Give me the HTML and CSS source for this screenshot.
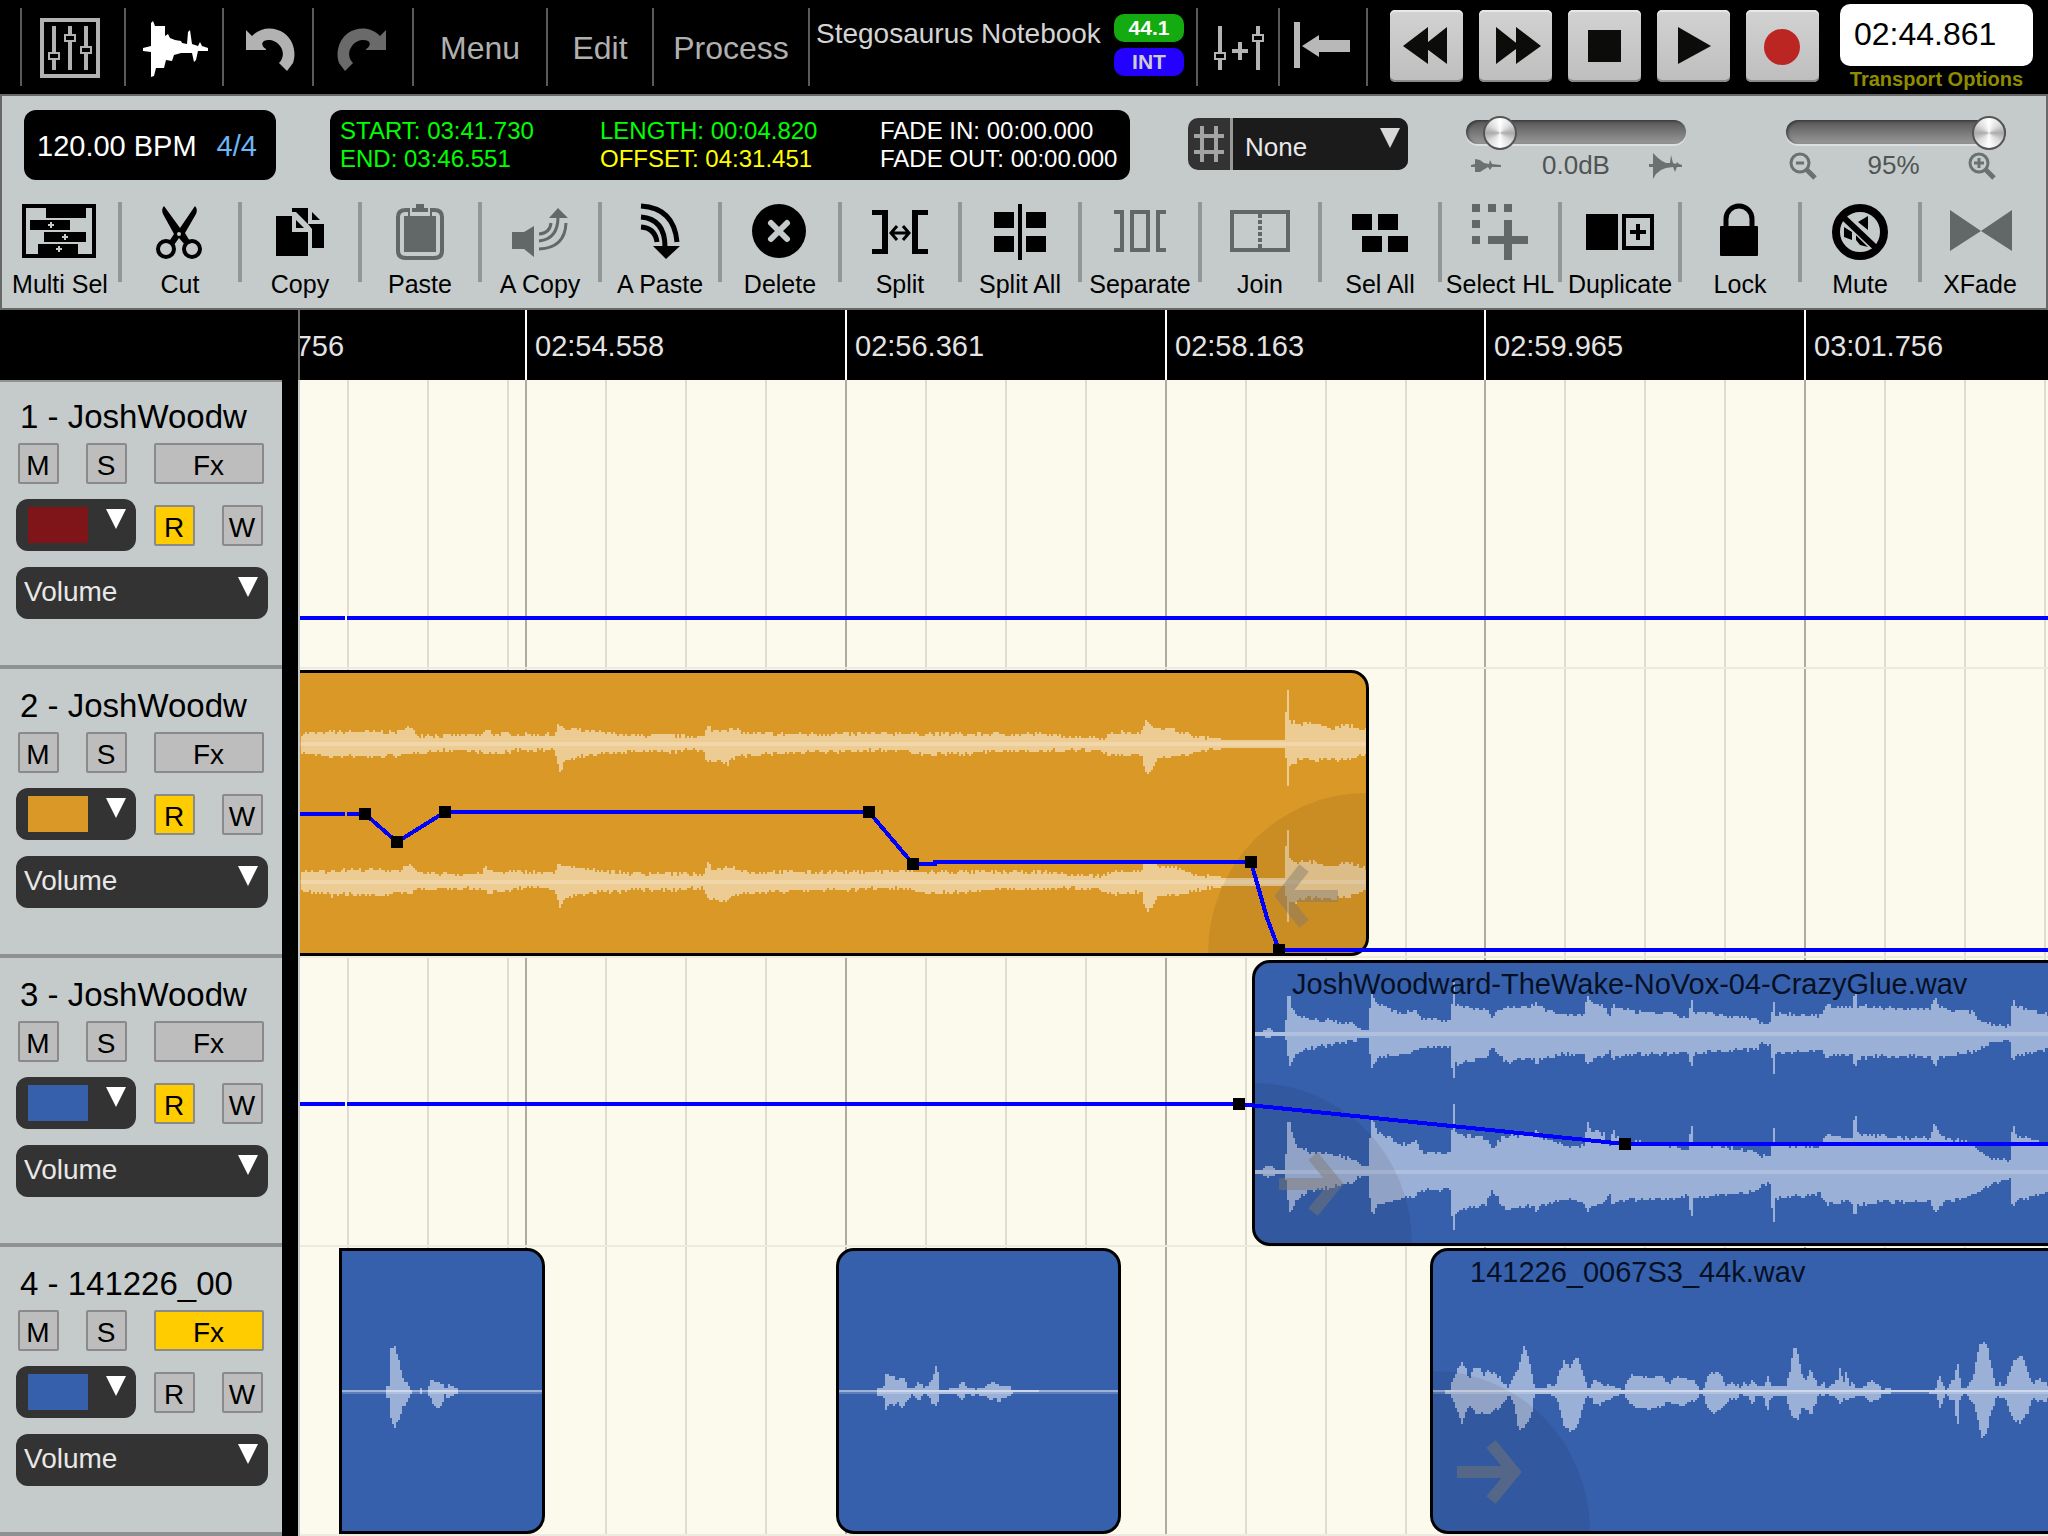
FILE: index.html
```html
<!DOCTYPE html>
<html lang="en">
<head>
    <meta charset="UTF-8">
    <meta name="viewport" content="width=device-width, initial-scale=1.0">
    <title>Stegosaurus Notebook</title>
    <link rel="stylesheet" href="styles.css">
</head>
<body>
    <header class="topbar">
        <button class="top-btn w104" aria-label="Mixer">
            <svg width="102" height="78" viewBox="22 8 102 78" fill="none" stroke="#b2b2b2">
                <rect x="42" y="20" width="56" height="56" stroke-width="4"/>
                <path d="M54 26V70M70 26V70M86 26V70" stroke-width="4"/>
                <g fill="#000" stroke-width="2">
                    <rect x="49" y="53" width="10" height="6"/>
                    <rect x="65" y="35" width="10" height="6"/>
                    <rect x="81" y="47" width="10" height="6"/>
                </g>
            </svg>
        </button>
        <button class="top-btn w98" aria-label="Audio editor">
            <svg width="96" height="78" viewBox="126 8 96 78" fill="#fff">
                <path d="M143 48L151 46V23L153 21L155 26H165V36L168 34L170 38L175 40L181 41L182 43L187 44L188 32L190 30L192 44L198 46L200 42L202 46L208 48V51L198 51L196 60L194 62L192 53L181 53L174 55L172 61L166 60L164 68H156L154 76L151 77V52L143 51Z"/>
            </svg>
        </button>
        <button class="top-btn w90" aria-label="Undo">
            <svg width="88" height="78" viewBox="224 8 88 78" fill="#b2b2b2">
                <path d="M246 30L252 36C260 27 274 26 284 33C295 41 296 55 293 63L287 71L279 63C284 58 284 51 280 46C276 40 268 39 264 41C261 43 262 47 266 49V50H246Z"/>
            </svg>
        </button>
        <button class="top-btn w100" aria-label="Redo">
            <svg width="98" height="78" viewBox="314 8 98 78" fill="#6a6a6a">
                <path transform="translate(632 0) scale(-1 1)" d="M246 30L252 36C260 27 274 26 284 33C295 41 296 55 293 63L287 71L279 63C284 58 284 51 280 46C276 40 268 39 264 41C261 43 262 47 266 49V50H246Z"/>
            </svg>
        </button>
        <button class="top-btn w134">Menu</button>
        <button class="top-btn w106">Edit</button>
        <button class="top-btn w156">Process</button>
        <div class="project">
            <span class="project-name">Stegosaurus Notebook</span>
            <div class="badges">
                <span class="badge badge-rate">44.1</span>
                <span class="badge badge-sync">INT</span>
            </div>
        </div>
        <button class="top-btn w82" aria-label="Add automation">
            <svg width="80" height="78" viewBox="1198 8 80 78" fill="none" stroke="#b4b4b4">
                <path d="M1220 26V70M1258 26V70M1232 51H1248M1240 42V60" stroke-width="4"/>
                <g fill="#000" stroke-width="2">
                    <rect x="1215" y="53" width="10" height="6"/>
                    <rect x="1253" y="35" width="10" height="6"/>
                </g>
            </svg>
        </button>
        <button class="top-btn w90 top-btn-last" aria-label="Return to start">
            <svg width="86" height="78" viewBox="1280 8 86 78" fill="#b8b8b8">
                <path d="M1294 22H1300V68H1294ZM1302 46L1319 35V40H1350V52H1319V57Z"/>
            </svg>
        </button>

        <div class="transport">
            <button aria-label="Rewind">
                <svg width="73" height="72" fill="#0c0c0a"><path d="M13 36L38 17V54ZM33 36L57 17V54Z"/></svg>
            </button>
            <button aria-label="Fast forward">
                <svg width="73" height="72" fill="#0c0c0a"><path d="M62 36L37 17V54ZM41 36L17 17V54Z"/></svg>
            </button>
            <button aria-label="Stop">
                <svg width="73" height="72" fill="#0c0c0a"><rect x="20" y="20" width="33" height="32"/></svg>
            </button>
            <button aria-label="Play">
                <svg width="73" height="72" fill="#0c0c0a"><path d="M54 36L21 17V54Z"/></svg>
            </button>
            <button aria-label="Record">
                <svg width="73" height="72" fill="#bb2622"><circle cx="36" cy="37" r="18"/></svg>
            </button>
        </div>
        <div class="clock">
            <output class="clock-time">02:44.861</output>
            <a class="clock-link" href="#">Transport Options</a>
        </div>
    </header>

    <section class="panel">
        <div class="info-row">
            <div class="tempo"><span>120.00 BPM</span><span class="meter">4/4</span></div>
            <div class="selection">
                <span>START: 03:41.730</span>
                <span>LENGTH: 00:04.820</span>
                <span class="white">FADE IN: 00:00.000</span>
                <span>END: 03:46.551</span>
                <span class="yellow">OFFSET: 04:31.451</span>
                <span class="white">FADE OUT: 00:00.000</span>
            </div>
            <div class="snap">
                <svg class="snap-icon" width="42" height="52" stroke="#a3a3a3" stroke-width="4"><path d="M14 8V44M28 8V44M6 18H36M6 34H36"/></svg>
                <div class="drop snap-drop">
                    <select aria-label="Snap to grid"><option>None</option></select>
                </div>
            </div>
            <div class="slider gain">
                <input type="range" min="0" max="100" value="9" aria-label="Gain">
                <div class="slider-legend">
                    <svg width="40" height="28" fill="#6b7070"><path d="M5 13L9 12V7L14 8L18 11L23 12L24 8L26 12L35 13V15L26 15L24 18L22 15L14 20H9V15L5 15Z"/></svg>
                    <output>0.0dB</output>
                    <svg width="40" height="28" fill="#6b7070"><path d="M3 12L7 12V1L10 4L12 6L16 9L20 11L24 11L25 3L27 11L30 12L31 10L33 12L36 13V15L31 15L29 20L27 15L20 16L15 18L10 22L7 27V15L3 15Z"/></svg>
                </div>
            </div>
            <div class="slider zoom">
                <input type="range" min="0" max="100" value="100" aria-label="Zoom">
                <div class="slider-legend">
                    <svg width="36" height="28" fill="none" stroke="#6b7070"><circle cx="14" cy="11" r="9" stroke-width="3"/><path d="M10 11H18" stroke-width="3"/><path d="M20 17L29 26" stroke-width="5"/></svg>
                    <output>95%</output>
                    <svg width="36" height="28" fill="none" stroke="#6b7070"><circle cx="14" cy="11" r="9" stroke-width="3"/><path d="M9 11H19M14 6V16" stroke-width="3"/><path d="M20 17L29 26" stroke-width="5"/></svg>
                </div>
            </div>
        </div>

        <nav class="tools">
            <button class="tool">
                <svg viewBox="2 0 116 62"><path d="M24 6H94V56H24Z" fill="none" stroke="#000" stroke-width="4"/><path d="M46 6H86V18H46ZM30 20H70V30H30ZM44 32H86V42H44ZM38 44H78V54H38Z"/><path d="M48 25H54M51 22V28M62 37H68M65 34V40M56 49H62M59 46V52" stroke="#c5cbcb" stroke-width="2"/></svg>
                Multi Sel
            </button>
            <button class="tool">
                <svg viewBox="2 0 116 62"><path d="M44 6Q41 9 43 14L54 34L48 43L54 45L59 38L65 45L71 43L65 33L76 14Q78 9 75 6L60 28Z"/><circle cx="59" cy="34" r="2" fill="#c5cbcb"/><circle cx="46" cy="49" r="8" fill="none" stroke="#000" stroke-width="4"/><circle cx="72" cy="49" r="8" fill="none" stroke="#000" stroke-width="4"/></svg>
                Cut
            </button>
            <button class="tool">
                <svg viewBox="2 0 116 62"><path d="M36 16H52V32H68V56H36ZM56 20L64 28H56ZM52 8H68V24L56 12H52ZM68 24H84V48H72V29ZM72 12L80 20H72Z"/></svg>
                Copy
            </button>
            <button class="tool off">
                <svg viewBox="2 0 116 62"><path d="M48 10H46Q38 10 38 17V51Q38 58 46 58H74Q82 58 82 51V17Q82 10 74 10H72" fill="none" stroke="#626868" stroke-width="4"/><path d="M44 16H48V8H50V16H70V8H72V16H76V52H44ZM56 4H64V8H68V12H52V8H56Z"/></svg>
                Paste
            </button>
            <button class="tool off">
                <svg viewBox="2 0 116 62"><path d="M32 32H44L54 26V57L44 49H32ZM78 8L88 18H69Z"/><path d="M59 49Q85 48 86 23M59 41Q78 39 78 17M59 34Q70 33 71 23" fill="none" stroke="#626868" stroke-width="3"/></svg>
                A Copy
            </button>
            <button class="tool">
                <svg viewBox="2 0 116 62"><path d="M53 46H80L66 59Z"/><path d="M41 6Q74 8 77 42M41 17Q65 19 65 47M41 27Q55 28 57 42" fill="none" stroke="#000" stroke-width="5"/></svg>
                A Paste
            </button>
            <button class="tool">
                <svg viewBox="2 0 116 62"><circle cx="59" cy="31" r="27"/><path d="M51 23L67 39M67 23L51 39" stroke="#c5cbcb" stroke-width="6" stroke-linecap="round"/></svg>
                Delete
            </button>
            <button class="tool">
                <svg viewBox="2 0 116 62"><path d="M32 10H48V54H32V49H42V15H32ZM88 10H72V54H88V49H78V15H88Z"/><path d="M57 26L51 33L57 40M63 26L69 33L63 40M52 33H68" fill="none" stroke="#000" stroke-width="3"/></svg>
                Split
            </button>
            <button class="tool">
                <svg viewBox="2 0 116 62"><path d="M34 12H54V28H34ZM66 12H86V28H66ZM34 36H54V52H34ZM66 36H86V52H66ZM58 4H62V60H58Z"/></svg>
                Split All
            </button>
            <button class="tool off">
                <svg viewBox="2 0 116 62"><path d="M34 12H42V50H34M52 12H68V50H52ZM86 12H78V50H86" fill="none" stroke="#626868" stroke-width="4"/></svg>
                Separate
            </button>
            <button class="tool off">
                <svg viewBox="2 0 116 62"><path d="M32 12H88V50H32Z" fill="none" stroke="#626868" stroke-width="4"/><path d="M60 14V48" stroke="#626868" stroke-width="4" stroke-dasharray="4 2"/></svg>
                Join
            </button>
            <button class="tool">
                <svg viewBox="2 0 116 62"><path d="M32 14H52V30H32ZM58 14H78V30H58ZM42 36H62V52H42ZM68 36H88V52H68Z"/></svg>
                Sel All
            </button>
            <button class="tool off">
                <svg viewBox="2 0 116 62"><path d="M32 4H40V12H32ZM48 4H56V12H48ZM64 4H72V12H64ZM32 20H40V28H32ZM32 36H40V44H32ZM64 20H72V36H88V44H72V60H64V44H48V36H64Z"/></svg>
                Select HL
            </button>
            <button class="tool">
                <svg viewBox="2 0 116 62"><path d="M26 14H58V50H26Z"/><path d="M64 16H92V48H64ZM70 32H86M78 24V40" fill="none" stroke="#000" stroke-width="4"/></svg>
                Duplicate
            </button>
            <button class="tool">
                <svg viewBox="2 0 116 62"><rect x="40" y="26" width="38" height="30" rx="1"/><path d="M46 28V19A13 13 0 0 1 72 19V28" fill="none" stroke="#000" stroke-width="5"/></svg>
                Lock
            </button>
            <button class="tool">
                <svg viewBox="2 0 116 62"><circle cx="60" cy="32" r="24" fill="none" stroke="#000" stroke-width="8"/><path d="M44 27L52 32V40L44 37ZM68 16V30L58 22ZM56 35L68 47L60 45L56 40Z"/><path d="M46 19L74 46" stroke="#c5cbcb" stroke-width="9"/><path d="M42 16L77 49" stroke="#000" stroke-width="6"/></svg>
                Mute
            </button>
            <button class="tool off">
                <svg viewBox="2 0 116 62"><path d="M30 10L61 31L92 10V51L61 31L30 51Z"/></svg>
                XFade
            </button>
        </nav>
    </section>

    <main class="session">
        <div class="corner"></div>
        <div class="ruler">
            <span class="tick tick-first">02:52.756</span>
            <span class="tick">02:54.558</span>
            <span class="tick">02:56.361</span>
            <span class="tick tick-short">02:58.163</span>
            <span class="tick">02:59.965</span>
            <span class="tick tick-rest">03:01.756</span>
        </div>

        <div class="headers">
            <section class="track">
                <h2>1 - JoshWoodw</h2>
                <div class="row">
                    <button class="sq">M</button>
                    <button class="sq">S</button>
                    <button class="sq fx">Fx</button>
                </div>
                <div class="row row-color">
                    <div class="drop color-drop red"><select aria-label="Track 1 colour"><option value="red"></option></select></div>
                    <button class="sq on">R</button>
                    <button class="sq">W</button>
                </div>
                <div class="drop param-drop"><select aria-label="Track 1 automation"><option>Volume</option></select></div>
            </section>
            <section class="track">
                <h2>2 - JoshWoodw</h2>
                <div class="row">
                    <button class="sq">M</button>
                    <button class="sq">S</button>
                    <button class="sq fx">Fx</button>
                </div>
                <div class="row row-color">
                    <div class="drop color-drop orange"><select aria-label="Track 2 colour"><option value="orange"></option></select></div>
                    <button class="sq on">R</button>
                    <button class="sq">W</button>
                </div>
                <div class="drop param-drop"><select aria-label="Track 2 automation"><option>Volume</option></select></div>
            </section>
            <section class="track">
                <h2>3 - JoshWoodw</h2>
                <div class="row">
                    <button class="sq">M</button>
                    <button class="sq">S</button>
                    <button class="sq fx">Fx</button>
                </div>
                <div class="row row-color">
                    <div class="drop color-drop blue"><select aria-label="Track 3 colour"><option value="blue"></option></select></div>
                    <button class="sq on">R</button>
                    <button class="sq">W</button>
                </div>
                <div class="drop param-drop"><select aria-label="Track 3 automation"><option>Volume</option></select></div>
            </section>
            <section class="track">
                <h2>4 - 141226_00</h2>
                <div class="row">
                    <button class="sq">M</button>
                    <button class="sq">S</button>
                    <button class="sq fx on">Fx</button>
                </div>
                <div class="row row-color">
                    <div class="drop color-drop blue"><select aria-label="Track 4 colour"><option value="blue"></option></select></div>
                    <button class="sq">R</button>
                    <button class="sq">W</button>
                </div>
                <div class="drop param-drop"><select aria-label="Track 4 automation"><option>Volume</option></select></div>
            </section>
        </div>

        <div class="lanes">
            <div class="grid">
                <i class="tick-first"></i><i></i><i></i><i class="tick-short"></i><i></i><i class="tick-rest"></i>
            </div>
            <div class="lane">
                <svg class="automation"><path d="M0 238H45M47 238H4000"/></svg>
            </div>
            <div class="lane">
                <div class="clip orange clip-2"><svg class="wave" data-wave="glue"></svg>
                    <svg class="fade fade-out" viewBox="0 0 160 160"><path d="M2 160A158 160 0 0 1 160 0V160Z"/><path class="arrow" d="M132 103H78M98 75L76 103L98 131"/></svg>
                </div>
                <svg class="automation"><path d="M0 145H45M47 145H65L97 173L145 143H569L613 195H635V193H951L967 249L979 281H4000"/><path class="node" d="M59 139h12v12h-12zM91 167h12v12h-12zM139 137h12v12h-12zM563 137h12v12h-12zM607 189h12v12h-12zM945 187h12v12h-12zM973 275h12v12h-12z"/></svg>
            </div>
            <div class="lane">
                <div class="clip blue clip-3"><svg class="wave" data-wave="crazy"></svg>
                    <span class="clip-name">JoshWoodward-TheWake-NoVox-04-CrazyGlue.wav</span>
                    <svg class="fade fade-in" viewBox="0 0 160 160"><path d="M157 160A157 160 0 0 0 0 0V160Z"/><path class="arrow" d="M24 101H82M58 73L81 101L58 129"/></svg>
                </div>
                <svg class="automation"><path d="M0 146H45M47 146H939L1325 186H4000"/><path class="node" d="M933 140h12v12h-12zM1319 180h12v12h-12z"/></svg>
            </div>
            <div class="lane">
                <div class="clip blue clip-4a"><svg class="wave" data-wave="hitA"></svg></div>
                <div class="clip blue clip-4b"><svg class="wave" data-wave="hitB"></svg></div>
                <div class="clip blue clip-4c"><svg class="wave" data-wave="voice"></svg>
                    <span class="clip-name">141226_0067S3_44k.wav</span>
                    <svg class="fade fade-in" viewBox="0 0 160 160"><path d="M157 160A157 160 0 0 0 0 0V160Z"/><path class="arrow" d="M24 101H82M58 73L81 101L58 129"/></svg>
                </div>
            </div>
        </div>
    </main>
    <script src="waves.js"></script>
</body>
</html>
```
FILE: styles.css
```css
* {
    box-sizing: border-box;
}
body {
    margin: 0;
    background: #000;
    color: #000;
    font-family: "Liberation Sans", Arial, Helvetica, sans-serif;
    overflow-x: hidden;
}
button, select {
    font-family: inherit;
    margin: 0;
    padding: 0;
    border: none;
    background: none;
    color: inherit;
}
svg {
    display: block;
    flex: none;
}

/* top bar */
.topbar {
    display: flex;
    height: 94px;
    padding-left: 20px;
}
.top-btn {
    flex: none;
    height: 78px;
    margin-top: 8px;
    border-left: 2px solid #5a5a5a;
    color: #b0b0b0;
    font-size: 32px;
    line-height: 42px;
    white-space: nowrap;
}
.top-btn-last {
    border-right: 2px solid #5a5a5a;
}
.w82 { width: 82px; }
.w90 { width: 90px; }
.w98 { width: 98px; }
.w100 { width: 100px; }
.w104 { width: 104px; }
.w106 { width: 106px; }
.w134 { width: 134px; padding-top: 2px; }
.w106 { padding-top: 2px; }
.w156 { width: 156px; padding-top: 2px; }
.project {
    display: flex;
    flex: 1;
    justify-content: space-between;
    min-width: 388px;
    height: 78px;
    margin-top: 8px;
    padding: 6px 12px 0 6px;
    border-left: 2px solid #5a5a5a;
}
.project-name {
    color: #d4d4d4;
    font-size: 28px;
    line-height: 40px;
    white-space: nowrap;
}
.badges {
    display: flex;
    flex-direction: column;
    gap: 6px;
}
.badge {
    width: 70px;
    height: 28px;
    border-radius: 10px;
    font-size: 21px;
    font-weight: bold;
    line-height: 28px;
    text-align: center;
}
.badge-rate {
    background: #13ab0f;
    color: #fff;
}
.badge-sync {
    background: #2400ff;
    color: #ccc;
}
.transport {
    display: flex;
    gap: 16px;
    margin: 10px 21px 0 22px;
}
.transport button {
    flex: none;
    width: 73px;
    height: 72px;
    border-radius: 5px;
    background: linear-gradient(#d2d2d2, #bebebe);
    box-shadow: inset 0 2px 0 #e8e8e8, inset 0 -2px 0 #8a8a8a;
}
.clock {
    flex: none;
    width: 193px;
    margin: 4px 15px 0 0;
    text-align: center;
}
.clock-time {
    display: block;
    height: 62px;
    padding-left: 14px;
    border-radius: 10px;
    background: #fff;
    font-size: 32px;
    line-height: 60px;
    text-align: left;
}
.clock-link {
    display: block;
    color: #8f8c00;
    font-size: 20px;
    font-weight: bold;
    line-height: 26px;
    text-decoration: none;
    white-space: nowrap;
}

/* info + tools */
.panel {
    padding-top: 14px;
    height: 216px;
    border: 2px solid #686868;
    background: #c5cbcb;
}
.info-row {
    display: flex;
    height: 92px;
    padding-left: 22px;
}
.tempo {
    display: flex;
    flex: none;
    gap: 20px;
    width: 252px;
    height: 70px;
    padding-left: 13px;
    border-radius: 12px;
    background: #000;
    color: #fff;
    font-size: 29px;
    line-height: 72px;
    white-space: nowrap;
}
.meter {
    color: #6cb6f7;
}
.selection {
    display: grid;
    flex: none;
    grid-template-columns: 260px 280px 1fr;
    grid-auto-rows: 28px;
    width: 800px;
    height: 70px;
    margin-left: 54px;
    padding: 7px 0 0 10px;
    border-radius: 12px;
    background: #000;
    color: #0f0;
    font-size: 24px;
    line-height: 28px;
    white-space: nowrap;
}
.yellow {
    color: #ff0;
}
.white {
    color: #fff;
}
.drop {
    position: relative;
    border-radius: 12px;
    background: #333;
    color: #e8e8e8;
    overflow: hidden;
}
.drop select {
    display: block;
    width: 100%;
    height: 52px;
    appearance: none;
    font-size: 28px;
}
.drop::after {
    content: "";
    position: absolute;
    top: 10px;
    right: 10px;
    width: 20px;
    height: 20px;
    background: #fff;
    clip-path: polygon(0 0, 100% 0, 50% 100%);
    pointer-events: none;
}
.snap {
    display: flex;
    flex: none;
    width: 220px;
    height: 52px;
    margin: 8px 58px 0;
    border-radius: 10px;
    background: #333;
    overflow: hidden;
}
.snap-drop {
    flex: 1;
    border-left: 3px solid #999;
    border-radius: 0;
    background: #1b1b1b;
}
.snap-drop select {
    padding: 6px 0 0 12px;
    font-size: 26px;
}
.snap-drop::after {
    right: 8px;
    background: #d8d8d8;
}
.slider {
    flex: none;
    width: 220px;
    margin-top: 5px;
}
.zoom {
    margin-left: 100px;
}
.slider input {
    display: block;
    width: 220px;
    height: 34px;
    margin: 0;
    appearance: none;
    background: none;
}
.slider input::-webkit-slider-runnable-track {
    height: 24px;
    border-radius: 12px;
    background: linear-gradient(#555, #999);
    box-shadow: inset 2px 1px 3px rgba(0, 0, 0, 0.4), 0 2px 0 #dde0e0;
}
.slider input::-webkit-slider-thumb {
    appearance: none;
    width: 34px;
    height: 34px;
    margin-top: -4px;
    border: 2px solid #555;
    border-radius: 50%;
    background: conic-gradient(#fff, #ddd 50deg, #aaa 90deg, #ddd 130deg, #fff 180deg, #ddd 230deg, #aaa 270deg, #ddd 310deg, #fff);
}
.slider-legend {
    display: flex;
    justify-content: space-between;
    padding-top: 3px;
    color: #505454;
    font-size: 26px;
    line-height: 26px;
}
.zoom .slider-legend {
    padding-right: 5px;
}
.tools {
    display: flex;
    justify-content: space-between;
    padding-right: 4px;
}
.tool {
    flex: 1;
    height: 96px;
    padding-right: 4px;
    background: linear-gradient(#929696, #929696) right top / 4px 80px no-repeat;
    font-size: 25px;
    line-height: 28px;
    text-align: center;
    white-space: nowrap;
}
.tool:last-child {
    background: none;
}
.tool svg {
    width: 116px;
    height: 62px;
    margin: -2px auto 8px;
}
.tool.off svg {
    fill: #626868;
}

/* session */
.session {
    display: grid;
    grid-template-columns: 298px minmax(0, 1fr);
}
.ruler, .grid {
    display: flex;
    overflow: hidden;
}
.ruler {
    height: 70px;
    border-left: 2px solid #6b6b66;
}
.tick {
    padding-left: 8px;
    border-left: 2px solid #fff;
    color: #e4e4e4;
    font-size: 29px;
    line-height: 72px;
}
.tick, .grid i {
    flex: 0 0 320px;
}
.ruler .tick-first, .grid .tick-first {
    margin-left: -95px;
}
.ruler .tick-short, .grid .tick-short {
    flex-basis: 319px;
}
.ruler .tick-rest, .grid .tick-rest {
    flex: 1 0 245px;
}
.headers {
    border-right: 16px solid #000;
}
.track {
    height: 289px;
    padding: 19px 14px 0 16px;
    border-bottom: 4px solid #8f9193;
    background: #c5cbcb;
}
.track:first-child {
    box-shadow: inset 0 2px 0 #8f9193;
}
.track h2 {
    margin: 0 0 8px 4px;
    font-size: 33px;
    font-weight: normal;
    line-height: 36px;
    white-space: nowrap;
}
.row {
    display: flex;
    gap: 27px;
    padding-left: 2px;
}
.row-color {
    align-items: center;
    margin: 15px 0 16px;
    padding-left: 0;
}
.sq {
    flex: none;
    width: 41px;
    height: 41px;
    padding: 5px 1px 0 0;
    border: 2px solid #8a8a8a;
    border-radius: 2px;
    background: #bdbdbd;
    font-size: 28px;
    line-height: 32px;
    text-align: center;
}
.sq.fx {
    width: 110px;
}
.sq.on {
    background: #fc0;
}
.color-drop {
    width: 120px;
    height: 52px;
    margin-right: -9px;
}
.color-drop select {
    background: linear-gradient(currentColor, currentColor) 12px 8px / 60px 36px no-repeat;
}
.red select {
    color: #7f1518;
}
.orange select {
    color: #da9827;
}
.blue select {
    color: #3660ac;
}
.param-drop select {
    padding: 0 0 4px 8px;
}
.lanes {
    position: relative;
    border-left: 2px solid #c5cbcb;
    background: #fcfaed;
    overflow: hidden;
}
.grid {
    position: absolute;
    inset: 0;
}
.grid i {
    border-left: 2px solid #aeaca2;
    background: linear-gradient(to right, transparent 78px, #e0ddd0 78px) 0 0 / 80px 100%;
}
.grid .tick-first {
    background-position: -18px 0;
}
.lane {
    position: relative;
    height: 289px;
    border-bottom: 2px solid #edebdf;
}
.automation {
    position: absolute;
    inset: 0;
    width: 100%;
    height: 100%;
    fill: none;
    stroke: #00f;
    stroke-width: 4;
    shape-rendering: crispEdges;
}
.automation .node {
    fill: #000;
    stroke: none;
}

/* clips sit on the timeline, their left edge is their start time */
.clip {
    position: absolute;
    top: 1px;
    height: 286px;
    border: 3px solid #000;
    border-radius: 18px;
    overflow: hidden;
}
.clip.orange {
    background: #da9827;
}
.clip.blue {
    background: #3660ac;
}
.clip-2 {
    left: -30px;
    width: 1099px;
}
.clip-3 {
    top: 2px;
    left: 952px;
    width: 1400px;
}
.clip-4a {
    left: 39px;
    width: 206px;
    border-radius: 0 18px 18px 0;
}
.clip-4b {
    left: 536px;
    width: 285px;
}
.clip-4c {
    left: 1130px;
    width: 1400px;
}
.wave {
    position: absolute;
    inset: 0;
    width: 100%;
    height: 100%;
    fill: #fff;
    shape-rendering: crispEdges;
}
.clip-name {
    position: relative;
    display: block;
    padding: 5px 0 0 37px;
    color: #061024;
    font-size: 29px;
    line-height: 32px;
}
.fade {
    position: absolute;
    bottom: 0;
    width: 160px;
    height: 160px;
    fill: rgba(0, 0, 0, 0.07);
}
.fade-in {
    left: 0;
}
.fade-out {
    right: 0;
}
.fade .arrow {
    fill: none;
    stroke: rgba(128, 120, 110, 0.45);
    stroke-width: 12;
}
```
FILE: waves.js
```js
// envelope points: position, peak above the centre line, peak below it
// x0 is where position 0 falls inside the clip, zoom is points per pixel
const waves = {
    glue: {
        centers: [[71, 1], [209, 1]],
        parts: [
            { x0: 17, zoom: 2.613, env: [
                [26,10,9],[100,11,12],[105,12,15],[112,12,12],[200,12,13],[290,12,11],[300,18,11],[315,15,11],[330,9,8],[440,8,6],[495,9,8],
                [510,14,10],[530,10,10],[600,10,6],[690,9,7],[695,18,14],[702,18,26],[708,16,24],[715,15,16],[745,14,13],[800,12,10],[870,9,9],[900,8,7],
                [960,9,8],[1080,7,6],[1086,14,17],[1092,20,17],[1100,13,17],[1145,15,20],[1150,15,14],[1200,10,11],[1300,10,9],[1400,10,8],[1490,10,7]] },
            { x0: 587, zoom: 2.529, env: [
                [0,10,7],[110,11,6],[165,10,11],[250,10,10],[350,10,7],[460,10,7],[545,7,6],[610,6,8],[630,9,12],[650,12,12],[710,10,10],
                [713,18,20],[722,22,29],[735,19,26],[745,17,18],[750,17,14],[800,13,13],[850,7,8],[910,5,5],[975,3,3],[1073,3,3],[1076,54,20],
                [1082,54,52],[1085,23,20],[1092,22,18],[1098,22,24],[1105,20,16],[1150,20,16],[1190,15,16],[1230,19,16],[1260,16,12],[1280,13,9]] }
        ]
    },
    crazy: {
        centers: [[71, 1], [209, 1.35]],
        parts: [
            { x0: -25, zoom: 1.917, env: [
                [45,2,1],[60,2,2],[72,6,4],[85,2,2],[104,2,2],[108,38,16],[112,38,32],[118,26,28],[125,20,20],[150,15,14],[210,12,10],[240,9,6],
                [250,4,3],[265,4,3],[267,34,26],[272,40,34],[280,30,24],[300,26,22],[325,20,20],[355,23,18],[365,15,13],[420,14,13],[424,34,34],
                [426,50,44],[428,50,44],[430,30,30],[450,27,28],[490,25,24],[500,17,12],[515,24,22],[525,26,28],[583,28,24],[586,32,34],[590,27,26],[640,19,20],
                [678,19,22],[682,37,32],[690,32,26],[715,28,22],[728,16,16],[732,36,28],[736,26,22],[780,22,20],[840,20,20],[879,16,18],
                [881,40,37],[883,40,37],[885,22,20],[950,18,16],[1010,15,15],[1015,12,10],[1036,11,9],[1038,32,38],[1041,32,38],[1044,20,20],[1130,18,16],
                [1140,28,24],[1160,27,22],[1192,26,22],[1195,42,34],[1199,42,32],[1202,28,24],[1260,26,22],[1340,25,22],[1347,36,28],[1353,34,30],[1358,28,24],[1370,25,22],
                [1420,22,18],[1435,14,14],[1460,10,9],[1493,8,5],[1498,34,26],[1503,34,24],[1506,26,20],[1520,26,20],[1568,20,15],[2200,20,15]] }
        ]
    },
    hitA: {
        centers: [[141, 1]],
        parts: [
            { x0: -52, zoom: 1.823, env: [
                [173,8,5],[180,8,5],[182,42,24],[189,50,36],[192,38,30],[197,30,28],[203,14,16],[210,10,10],[218,3,3],[222,0,0],[234,0,0],[236,6,3],[239,0,0],[250,1,0],
                [253,10,6],[265,10,16],[275,9,14],[280,4,2],[285,7,6],[303,4,2],[305,0,0]] }
        ]
    },
    hitB: {
        centers: [[141, 1]],
        parts: [
            { x0: -549, zoom: 1.823, env: [
                [1070,3,3],[1080,4,3],[1084,18,16],[1090,16,14],[1105,12,10],[1115,14,16],[1125,6,8],[1132,3,2],[1140,6,6],[1145,10,8],
                [1155,4,2],[1164,8,4],[1170,16,12],[1178,28,16],[1182,2,2],[1215,4,3],[1224,10,7],[1232,4,2],[1241,3,3],[1243,10,8],[1246,2,2],
                [1265,5,4],[1275,9,8],[1290,6,8],[1310,6,4],[1316,1,1],[1365,1,0]] }
        ]
    },
    voice: {
        centers: [[141, 1]],
        parts: [
            { x0: -33, zoom: 2.42, env: [
                [105,1,1],[118,2,2],[130,18,12],[147,28,32],[155,26,20],[165,14,14],[183,26,22],[200,18,20],[212,20,22],[235,16,16],[255,8,8],
                [262,5,2],[275,18,14],[285,26,38],[298,46,36],[310,34,30],[318,14,16],[324,3,2],[350,3,2],[358,8,2],[372,5,4],[382,20,12],
                [395,30,34],[410,26,38],[425,36,38],[440,20,16],[448,8,6],[455,3,4],[470,12,14],[490,7,10],[520,5,4],[540,2,1],[550,12,10],
                [565,18,14],[580,15,16],[597,16,18],[630,15,14],[650,8,10],[670,14,14],[700,12,10],[715,10,10],[722,2,1],[735,4,4],[740,16,16],
                [757,20,22],[775,17,16],[785,8,10],[815,8,6],[822,4,2],[832,10,4],[842,5,4],[852,12,12],[860,6,4],[875,6,4],[888,16,18],
                [895,8,6],[905,5,4],[933,6,4],[942,24,20],[953,48,30],[962,36,26],[970,18,14],[978,12,16],[993,22,24],[1003,14,12],[1010,4,2],
                [1022,10,4],[1030,3,2],[1055,12,6],[1061,10,8],[1063,28,16],[1066,28,16],[1068,8,5],[1079,20,8],[1085,6,5],[1093,12,6],[1100,4,4],[1120,5,4],
                [1140,12,10],[1158,8,8],[1162,2,1],[1180,4,2],[1195,1,0],[1280,1,1],[1295,4,2],[1305,16,18],[1315,4,4],[1320,1,1],[1335,14,10],
                [1342,12,8],[1344,28,34],[1350,26,30],[1352,14,8],[1357,4,4],[1370,3,1],[1377,12,8],[1385,14,10],[1392,30,20],[1400,46,38],[1408,50,46],
                [1418,48,42],[1425,34,26],[1435,14,12],[1442,4,3],[1452,10,8],[1462,4,4],[1470,16,14],[1480,28,28],[1492,36,30],[1505,34,30],
                [1520,16,18],[1530,8,5],[1545,14,10],[1560,10,8],[1568,8,7],[2200,8,7]] }
        ]
    }
};

let seed = 7;
function random() {
    seed = (seed * 16807) % 2147483647;
    return seed / 2147483647;
}

function levelAt(env, pos) {
    for (let i = 1; i < env.length; i++) {
        if (pos <= env[i][0]) {
            const a = env[i - 1], b = env[i];
            const t = (pos - a[0]) / (b[0] - a[0]);
            return [a[1] + (b[1] - a[1]) * t, a[2] + (b[2] - a[2]) * t];
        }
    }
    return [0, 0];
}

// round to whole 2px steps
function peak(level) {
    const jitter = level > 6 ? random() * 4 - 2 : 0;
    return Math.max(0, Math.round((level + jitter) / 2) * 2);
}

document.querySelectorAll(".wave").forEach(svg => {
    const wave = waves[svg.dataset.wave];
    const mono = wave.centers.length === 1;
    let html = "";
    wave.centers.forEach(([cy, gain]) => {
        let d = "";
        wave.parts.forEach(part => {
            const env = part.env;
            const first = Math.ceil((part.x0 + env[0][0] / part.zoom) / 2) * 2;
            const last = part.x0 + env[env.length - 1][0] / part.zoom;
            for (let x = first; x < last; x += 2) {
                const [up, down] = levelAt(env, (x - part.x0) * part.zoom);
                const top = peak(up * gain), bottom = peak(down * gain);
                d += `M${x} ${cy - top}h2v${top + bottom}h-2z`;
            }
        });
        html += `<path d="${d}" opacity="0.5"/>`;
        html += `<rect x="0" y="${cy - 2}" width="100%" height="4" opacity="0.2"/>`;
        if (mono) {
            html += `<rect x="0" y="${cy - 2}" width="100%" height="2" opacity="0.4"/>`;
        }
    });
    svg.innerHTML = html;
});
```
